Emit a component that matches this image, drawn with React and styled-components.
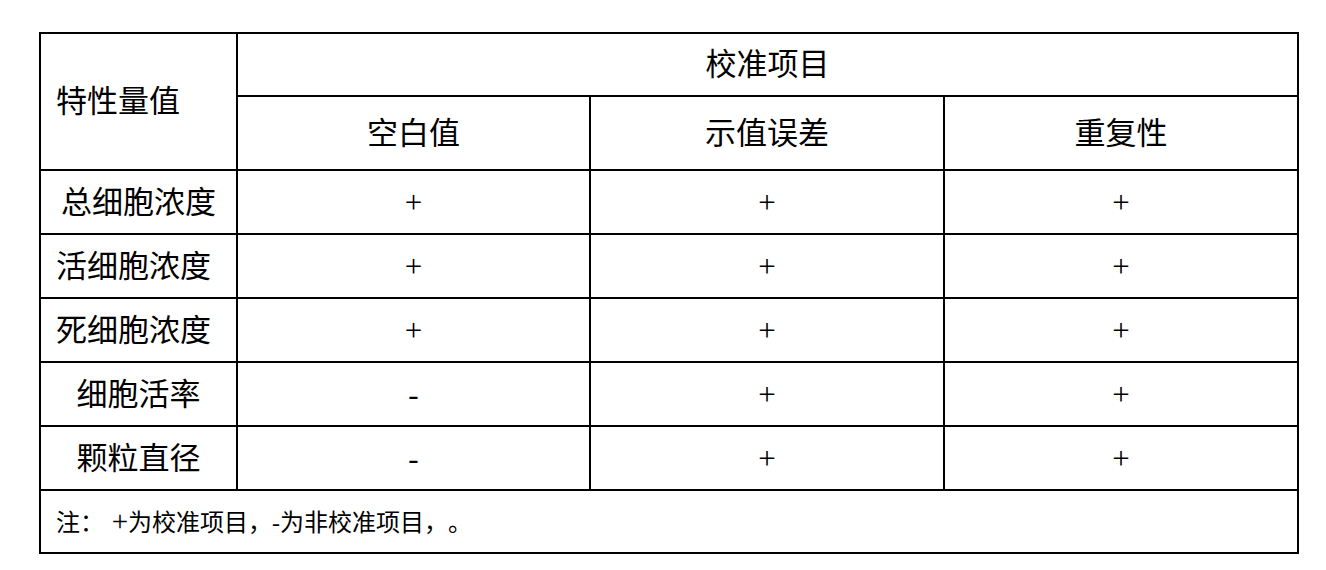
import React from "react";
import styled, { createGlobalStyle } from "styled-components";

const Global = createGlobalStyle`
  html, body { margin: 0; padding: 0; background: #fff; }
  body { font-family: "Liberation Serif", "Noto Sans CJK SC", serif; color: #000; }
`;

const Page = styled.div`
  padding: 32px 0 0 39px;
`;

const Table = styled.table`
  border-collapse: collapse;
  table-layout: fixed;
  width: 1258px;
  border: 2px solid #000;
`;

const Cell = styled.td`
  border: 2px solid #000;
  padding: 0 0 0 ${(p) => (p.$align === "left" ? "15px" : "0")};
  text-align: ${(p) => p.$align || "center"};
  vertical-align: middle;
  font-size: ${(p) => p.$size || 31}px;
  font-weight: 400;
  line-height: 1;
  white-space: nowrap;
`;

const Note = styled(Cell)`
  font-size: 24px;
  font-feature-settings: "chws" 0, "halt" 0, "palt" 0;
`;

const Mark = styled.span`
  display: inline-block;
  width: 24px;
  font-size: 29px;
  line-height: 1;
  text-align: right;
`;

const Punct = styled.span`
  display: inline-block;
  width: 24px;
`;

const Row = styled.tr`
  height: ${(p) => p.$h}px;
`;

const rows = [
  { name: "总细胞浓度", align: "center", v: ["+", "+", "+"] },
  { name: "活细胞浓度", align: "left", v: ["+", "+", "+"] },
  { name: "死细胞浓度", align: "left", v: ["+", "+", "+"] },
  { name: "细胞活率", align: "center", v: ["-", "+", "+"] },
  { name: "颗粒直径", align: "center", v: ["-", "+", "+"] },
];

export default function App() {
  return (
    <>
      <Global />
      <Page>
        <Table>
          <colgroup>
            <col style={{ width: 197 }} />
            <col style={{ width: 353 }} />
            <col style={{ width: 354 }} />
            <col style={{ width: 354 }} />
          </colgroup>
          <tbody>
            <Row $h={63}>
              <Cell as="th" rowSpan={2} $align="left">特性量值</Cell>
              <Cell as="th" colSpan={3}>校准项目</Cell>
            </Row>
            <Row $h={74}>
              <Cell as="th">空白值</Cell>
              <Cell as="th">示值误差</Cell>
              <Cell as="th">重复性</Cell>
            </Row>
            {rows.map((r) => (
              <Row $h={64} key={r.name}>
                <Cell $align={r.align}>{r.name}</Cell>
                {r.v.map((x, i) => (
                  <Cell key={i}>{x}</Cell>
                ))}
              </Row>
            ))}
            <Row $h={63}>
              <Note colSpan={4} $align="left">
                注：<Mark>+</Mark>为校准项目<Punct>，</Punct>-为非校准项目<Punct>，</Punct>。
              </Note>
            </Row>
          </tbody>
        </Table>
      </Page>
    </>
  );
}
